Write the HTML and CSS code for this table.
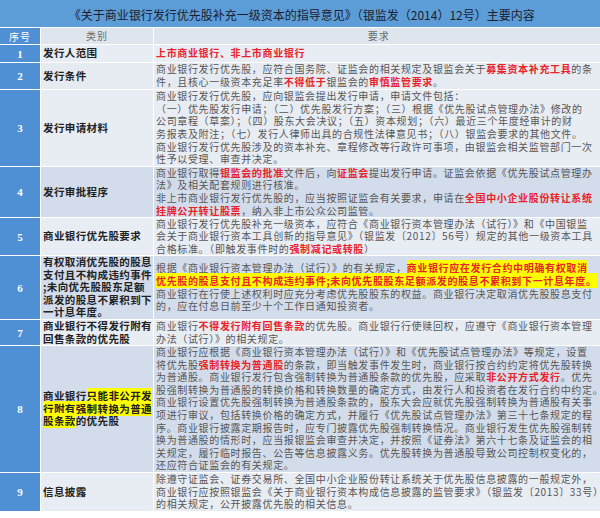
FILE: index.html
```html
<!DOCTYPE html>
<html lang="zh-CN">
<head>
<meta charset="utf-8">
<title>优先股指导意见主要内容</title>
<link rel="stylesheet" href="styles.css">
</head>
<body>
<div class="sheet">
  <div class="title">《关于商业银行发行优先股补充一级资本的指导意见》（银监发（2014）12号）主要内容</div>

  <div class="seq head">序号</div>
  <div class="cat headcell">类别</div>
  <div class="req headcell">要求</div>

  <div class="seq">1</div>
  <div class="cat r1"><p>发行人范围</p></div>
  <div class="req r1"><p><b class="red">上市商业银行、非上市商业银行</b></p></div>

  <div class="seq">2</div>
  <div class="cat r2"><p>发行条件</p></div>
  <div class="req r2"><p>商业银行发行优先股，应符合国务院、证监会的相关规定及银监会关于<b class="red">募集资本补充工具</b>的条<br>件，且核心一级资本充足率<b class="red">不得低于</b>银监会的<b class="red">审慎监管要求</b>。</p></div>

  <div class="seq">3</div>
  <div class="cat r3"><p>发行申请材料</p></div>
  <div class="req r3"><p>商业银行发行优先股，应向银监会提出发行申请，申请文件包括：<br>（一）优先股发行申请；（二）优先股发行方案；（三）根据《优先股试点管理办法》修改的<br>公司章程（草案）；（四）股东大会决议；（五）资本规划；（六）最近三个年度经审计的财<br>务报表及附注；（七）发行人律师出具的合规性法律意见书；（八）银监会要求的其他文件。<br>商业银行发行优先股涉及的资本补充、章程修改等行政许可事项，由银监会相关监管部门一次<br>性予以受理、审查并决定。</p></div>

  <div class="seq">4</div>
  <div class="cat r4"><p>发行审批程序</p></div>
  <div class="req r4"><p>商业银行取得<b class="red">银监会的批准</b>文件后，向<b class="red">证监会</b>提出发行申请。证监会依据《优先股试点管理办<br>法》及相关配套规则进行核准。<br>非上市商业银行发行优先股的，应当按照证监会有关要求，申请在<b class="red">全国中小企业股份转让系统</b><br><b class="red">挂牌公开转让股票</b>，纳入非上市公众公司监管。</p></div>

  <div class="seq">5</div>
  <div class="cat r5"><p>商业银行优先股要求</p></div>
  <div class="req r5"><p>商业银行发行优先股补充一级资本，应符合《商业银行资本管理办法（试行）》和《中国银监<br>会关于商业银行资本工具创新的指导意见》（银监发〔2012〕56号）规定的其他一级资本工具<br>合格标准。（即触发事件时的<b class="red">强制减记或转股</b>）</p></div>

  <div class="seq">6</div>
  <div class="cat r6"><p>有权取消优先股的股息<br>支付且不构成违约事件<br>;未向优先股股东足额<br>派发的股息不累积到下<br>一计息年度。</p></div>
  <div class="req r6"><p>根据《商业银行资本管理办法（试行）》的有关规定，<b class="red hl">商业银行应在发行合约中明确有权取消</b><br><b class="red hl">优先股的股息支付且不构成违约事件;未向优先股股东足额派发的股息不累积到下一计息年度。</b><br>商业银行在行使上述权利时应充分考虑优先股股东的权益。商业银行决定取消优先股股息支付<br>的，应在付息日前至少十个工作日通知投资者。</p></div>

  <div class="seq">7</div>
  <div class="cat r7"><p>商业银行不得发行附有<br>回售条款的优先股</p></div>
  <div class="req r7"><p>商业银行<b class="red">不得发行附有回售条款</b>的优先股。商业银行行使赎回权，应遵守《商业银行资本管理<br>办法（试行）》的相关规定。</p></div>

  <div class="seq">8</div>
  <div class="cat r8"><p>商业银行<span class="hl">只能非公开发</span><br><span class="hl">行附有强制转换为普通</span><br><span class="hl">股条款</span>的优先股</p></div>
  <div class="req r8"><p>商业银行应根据《商业银行资本管理办法（试行）》和《优先股试点管理办法》等规定，设置<br>将优先股<b class="red">强制转换为普通股</b>的条款，即当触发事件发生时，商业银行按合约约定将优先股转换<br>为普通股。商业银行发行包含强制转换为普通股条款的优先股，应采取<b class="red">非公开方式发行</b>。优先<br>股强制转换为普通股的转换价格和转换数量的确定方式，由发行人和投资者在发行合约中约定。<br>商业银行设置优先股强制转换为普通股条款的，股东大会应就优先股强制转换为普通股有关事<br>项进行审议，包括转换价格的确定方式，并履行《优先股试点管理办法》第三十七条规定的程<br>序。商业银行披露定期报告时，应专门披露优先股强制转换情况。商业银行发生优先股强制转<br>换为普通股的情形时，应当报银监会审查并决定，并按照《证券法》第六十七条及证监会的相<br>关规定，履行临时报告、公告等信息披露义务。优先股转换为普通股导致公司控制权变化的，<br>还应符合证监会的有关规定。</p></div>

  <div class="seq">9</div>
  <div class="cat r9"><p>信息披露</p></div>
  <div class="req r9"><p>除遵守证监会、证券交易所、全国中小企业股份转让系统关于优先股信息披露的一般规定外，<br>商业银行应按照银监会《关于商业银行资本构成信息披露的监管要求》（银监发〔2013〕33号）<br>的相关规定，公开披露优先股的相关信息。</p></div>
</div>
</body>
</html>
```

FILE: styles.css
```css
html, body {
  margin: 0;
  padding: 0;
  background: #ffffff;
}

body {
  font-family: "Noto Sans CJK SC", "Noto Sans", sans-serif;
}

.sheet {
  width: 598px;
  display: grid;
  grid-template-columns: 40px 112px 1fr;
  grid-template-rows: 27px 16px 17px 26px 76px 50px 37px 63px 25px 126px 38px;
  column-gap: 1px;
  row-gap: 1px;
  background: #ffffff;
}

.title {
  grid-column: 1 / span 3;
  background: #5d9dd7;
  color: #1a2030;
  font-size: 12px;
  letter-spacing: 0;
  display: flex;
  align-items: center;
  justify-content: center;
  padding-top: 1px;
  white-space: nowrap;
}

.seq {
  background: #4f8fd4;
  color: #ffffff;
  font-family: "Liberation Serif", "Noto Sans CJK SC", serif;
  font-size: 11px;
  font-weight: bold;
  display: flex;
  align-items: center;
  justify-content: center;
}

.seq.head {
  font-family: "Noto Sans CJK SC", sans-serif;
  font-weight: normal;
  font-size: 10px;
  letter-spacing: 1px;
}

.cat {
  display: flex;
  align-items: center;
  padding-left: 2px;
  font-size: 10.5px;
  letter-spacing: 0.4px;
  line-height: 12.6px;
  font-weight: bold;
  color: #222222;
  white-space: nowrap;
}

.req {
  display: flex;
  align-items: center;
  padding-left: 2px;
  color: #565656;
  font-size: 10px;
  letter-spacing: 0.65px;
  line-height: 12.6px;
  white-space: nowrap;
}

.cat p,
.req p {
  margin: 0;
}

.cat.headcell,
.req.headcell {
  background: #dfe5ed;
  color: #6a6a6a;
  font-size: 10px;
  letter-spacing: 1px;
  font-weight: normal;
  justify-content: center;
  padding-left: 0;
}

.r1, .r3, .r5, .r7, .r9 {
  background: #e8ecf3;
}

.r2 {
  background: #e6ebf2;
}

.r4, .r6, .r8 {
  background: #d3dcea;
}

.red {
  color: #e8232b;
  font-weight: bold;
}

.hl {
  background: #ffff00;
}
```
